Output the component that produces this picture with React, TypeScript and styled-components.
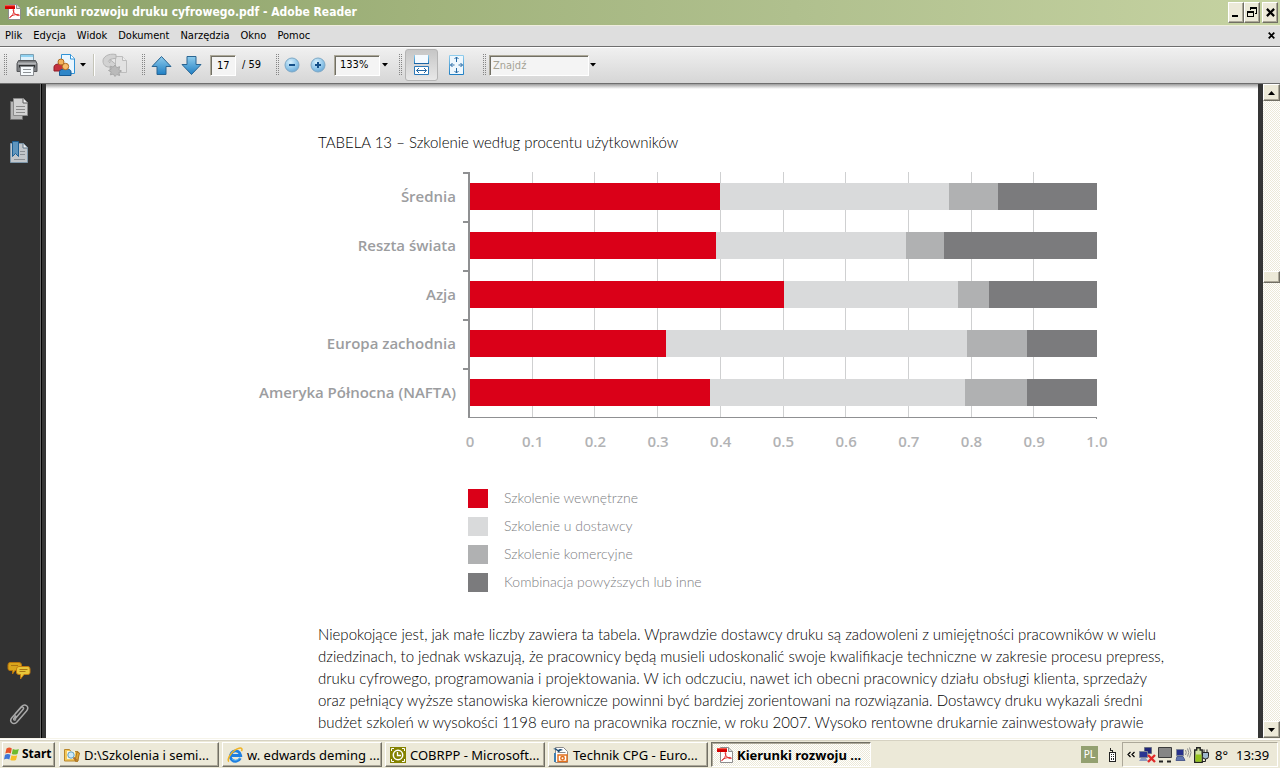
import React from 'react';
import styled, { createGlobalStyle, css } from 'styled-components';

const ui = '"DejaVu Sans Condensed", "DejaVu Sans", sans-serif';
const shell = '"Noto Sans", "Open Sans", sans-serif';
const doc = 'Lato, "Open Sans", sans-serif';
const chartFont = '"Open Sans", "Noto Sans", sans-serif';
const face = '#ece9d8';

const GlobalStyle = createGlobalStyle`
  *, *::before, *::after { box-sizing: border-box; }
  body { margin: 0; background: #fff; }
  button, input, select { font: inherit; color: inherit; margin: 0; border-radius: 0; }
  svg { display: block; flex: none; }
`;

const raised = css`
  background: ${face};
  border: 1px solid;
  border-color: #fff #716f64 #716f64 #fff;
  box-shadow: inset -1px -1px 0 #aca899;
`;

const checker = css`
  background: repeating-conic-gradient(${face} 0 25%, #fff 0 50%) 0 0 / 2px 2px;
`;

/* ---------- window frame ---------- */

const Screen = styled.div`
  display: flex;
  flex-direction: column;
  height: 100vh;
  overflow: hidden;
  font: 11px/14px ${ui};
  color: #000;
`;

const TitleBar = styled.header`
  display: flex;
  align-items: center;
  height: 26px;
  padding: 0 2px 2px 5px;
  gap: 5px;
  background: linear-gradient(90deg, #8ba169, #a1b37c 33%, #b0c08e 62%, #c6d3a2);
  border-bottom: 1px solid #efedde;
`;

const WindowTitle = styled.h1`
  flex: 1;
  margin: 0;
  font: bold 12px/16px ${ui};
  color: #fff;
  white-space: nowrap;
`;

const CaptionButtons = styled.div`
  display: flex;
  padding-top: 1px;
`;

const CaptionButton = styled.button<{ $apart?: boolean }>`
  ${raised}
  display: flex;
  align-items: center;
  justify-content: center;
  width: 16px;
  height: 21px;
  padding: 0;
  margin-left: ${(p) => (p.$apart ? 2 : 0)}px;
`;

const MenuBar = styled.nav`
  display: flex;
  align-items: center;
  justify-content: space-between;
  height: 21px;
  padding: 0 5px 1px;
  background: #dedede;
  border-bottom: 1px solid #6e6e6e;
`;

const MenuList = styled.div`
  display: flex;
  gap: 11px;
`;

const MenuItem = styled.button`
  padding: 0;
  border: 0;
  background: none;
`;

/* ---------- toolbar ---------- */

const ToolBar = styled.div`
  display: flex;
  align-items: center;
  gap: 8px;
  height: 37px;
  padding: 0 3px 1px;
  background: linear-gradient(#f0f0f0, #d6d6d6);
  border-top: 1px solid #fff;
  border-bottom: 1px solid #6e6e6e;
`;

const ToolGroup = styled.div`
  display: flex;
  align-items: center;
`;

const Grip = styled.span`
  width: 4px;
  height: 22px;
  background: conic-gradient(#858585 0 25%, transparent 0) 0 0 / 2px 2px;
`;

const ToolButton = styled.button<{ $w: number; $on?: boolean }>`
  display: flex;
  align-items: center;
  justify-content: center;
  gap: 3px;
  width: ${(p) => p.$w}px;
  height: 32px;
  padding: 0;
  margin-left: ${(p) => (p.$on ? 3 : 0)}px;
  border: 1px solid ${(p) => (p.$on ? '#b4b4b4' : 'transparent')};
  border-radius: 3px;
  background: ${(p) => (p.$on ? 'linear-gradient(#c6c6c6, #e8e8e8)' : 'none')};
`;

const Separator = styled.span`
  width: 2px;
  height: 22px;
  margin: 0 2px;
  background: linear-gradient(90deg, #c4c4b8 50%, #fff 50%);
`;

const sunken = css`
  height: 21px;
  border: 1px solid;
  border-color: #aca899 #fff #fff #aca899;
  box-shadow: inset 1px 1px 0 #716f64;
  background: #f4f4f4;
  outline: 0;
`;

const PageInput = styled.input`
  ${sunken}
  width: 26px;
  margin: 0 6px 0 4px;
  padding: 0 0 0 6px;
`;

const ZoomSelect = styled.select`
  ${sunken}
  appearance: none;
  width: 46px;
  margin-left: 4px;
  padding: 0 0 0 5px;
`;

const FindInput = styled.input`
  ${sunken}
  width: 100px;
  margin-left: 3px;
  padding: 0 3px;
  &::placeholder { color: #a5a294; opacity: 1; }
`;

const PageCount = styled.span`
  width: 25px;
  white-space: nowrap;
`;

/* ---------- document area ---------- */

const Main = styled.main`
  flex: 1;
  display: flex;
  min-height: 0;
`;

const SidePanel = styled.aside`
  display: flex;
  flex-direction: column;
  justify-content: space-between;
  width: 46px;
  padding: 13px 8px 12px 0;
  background: linear-gradient(90deg, #323232 40px, #6a6a6a 40px 41px, #000 41px 42px, #353535 42px);
`;

const PanelGroup = styled.div`
  display: flex;
  flex-direction: column;
  gap: 19px;
`;

const PanelButton = styled.button`
  display: flex;
  justify-content: center;
  align-items: center;
  height: 24px;
  padding: 0;
  border: 0;
  background: none;
`;

const Page = styled.article`
  flex: 1;
  min-width: 0;
  overflow: hidden;
  padding: 49px 89px 0 214px;
  font-family: ${doc};
  background: linear-gradient(#9a9a9a, #d8d8d8 3px, #fff 5px);
`;

const Caption = styled.h2`
  margin: 0 0 21px 58px;
  font: 300 15px/18px ${doc};
`;

const Gutter = styled.div`
  width: 5px;
  background: #353535;
`;

const Chart = styled.figure`
  margin: 0;
  padding-right: 72px;
`;

const Row = styled.div`
  display: flex;
  height: 49px;
`;

const RowLabel = styled.div`
  display: flex;
  justify-content: flex-end;
  width: 196px;
  margin-right: 7px;
  white-space: nowrap;
  font: 600 15px/48px ${chartFont};
  color: #9c9d9f;
`;

const Tick = styled.div`
  width: 7px;
  border-top: 2px solid #8f9092;
  border-right: 2px solid #8f9092;
`;

const Plot = styled.div`
  flex: 1;
  display: grid;
  grid-template: 1fr / 1fr;
  > * { grid-area: 1 / 1; }
`;

const GridLines = styled.div`
  display: flex;
`;

const GridCell = styled.span`
  flex: 1;
  border-right: 1px solid #cfd0d1;
  &:last-child { border-color: transparent; }
`;

const Bar = styled.div`
  display: flex;
  align-self: center;
  height: 27px;
`;

const Segment = styled.span<{ $color: string }>`
  background: ${(p) => p.$color};
`;

const Baseline = styled.div`
  height: 2px;
  margin-left: 208px;
  border-top: 1px solid #8f9092;
  border-right: 1px solid #8f9092;
`;

const Axis = styled.div`
  display: flex;
  justify-content: space-between;
  margin: 12px -20px 0 190px;
  font: 600 15px/20px ${chartFont};
  color: #b2b3b5;
`;

const AxisLabel = styled.span`
  width: 40px;
  text-align: center;
`;

const Legend = styled.ul`
  display: flex;
  flex-direction: column;
  gap: 8px;
  margin: 37px 0 0 208px;
  padding: 0;
  list-style: none;
`;

const LegendItem = styled.li`
  display: flex;
  align-items: center;
  gap: 16px;
  height: 20px;
  font-size: 14px;
  font-weight: 300;
  line-height: 18px;
  color: #7c7d7f;
`;

const Swatch = styled.span<{ $color: string }>`
  width: 20px;
  height: 19px;
  background: ${(p) => p.$color};
`;

const Body = styled.p`
  margin: 31px 0 0 58px;
  font-size: 15px;
  font-weight: 300;
  line-height: 22px;
  white-space: nowrap;
`;

const Line = styled.span`
  display: block;
`;

const ScrollBar = styled.div`
  ${checker}
  display: flex;
  flex-direction: column;
  width: 17px;
`;

const ScrollButton = styled.button`
  ${raised}
  display: flex;
  align-items: center;
  justify-content: center;
  height: 17px;
  padding: 0;
`;

const Thumb = styled.div`
  ${raised}
  height: 12px;
`;

const ScrollSpace = styled.div<{ $grow: number }>`
  flex: ${(p) => p.$grow};
`;

/* ---------- task bar ---------- */

const TaskBar = styled.footer`
  display: flex;
  align-items: center;
  gap: 4px;
  height: 30px;
  padding: 2px 2px 0;
  background: ${face};
  border-top: 1px solid #f6f4ea;
  box-shadow: inset 0 1px 0 #fff, inset 0 2px 0 #d6d2c2;
  font: 13px/18px ${shell};
`;

const StartButton = styled.button`
  ${raised}
  display: flex;
  align-items: center;
  gap: 2px;
  width: 53px;
  height: 25px;
  padding: 0 1px 2px;
  font-size: 12px;
  font-weight: 700;
`;

const Tasks = styled.div`
  flex: 1;
  display: flex;
  gap: 3px;
  min-width: 0;
`;

const TaskButton = styled.button<{ $active?: boolean }>`
  ${raised}
  display: flex;
  align-items: center;
  gap: 4px;
  width: 160px;
  height: 25px;
  padding: 0 4px;
  white-space: nowrap;
  ${(p) =>
    p.$active &&
    css`
      ${checker}
      border-color: #716f64 #fff #fff #716f64;
      box-shadow: inset 1px 1px 0 #aca899;
      padding: 1px 3px 0 5px;
      font-weight: 700;
    `}
`;

const Language = styled.button`
  width: 17px;
  height: 17px;
  padding: 0;
  border: 0;
  background: #93a070;
  color: #fff;
  font: 11px/17px ${ui};
`;

const DeskBand = styled.span`
  display: flex;
  padding: 0 1px 0 6px;
`;

const Tray = styled.div`
  display: flex;
  align-items: center;
  gap: 2px;
  height: 25px;
  padding: 0 8px 0 4px;
  border: 1px solid;
  border-color: #aca899 #fff #fff #aca899;
`;

const Expand = styled.button`
  padding: 0;
  margin-right: 2px;
  border: 0;
  background: none;
`;

const Temperature = styled.span`
  width: 22px;
  padding-left: 3px;
`;

const Clock = styled.time`
  width: 33px;
`;

/* ---------- icons ---------- */

const PdfIcon = ({ size = 16 }: { size?: number }) => (
  <svg width={size} height={size} viewBox="0 0 16 16">
    <path d="M3.5.5h8l4 4v11h-12z" fill="#fff" stroke="#8d8d8d" />
    <path d="M11.500.5v4h4" fill="#ddd" stroke="#8d8d8d" />
    <path d="M0 1h10v4H0z" fill="#d40000" />
    <path d="M0 1h10v1.200H0z" fill="#f0584a" />
    <path d="M5 13.500c2-1 4-4.500 3.800-7.500 0-1-.9-.8-.7.200.6 3 3 5.500 5.700 5.400 1.200-.1.600-1.200-.8-1.200-2.800 0-5.700.9-7.600 2.200-1 .8-1 1.500-.4.900z" fill="none" stroke="#e03030" />
  </svg>
);

const MinimizeGlyph = () => (
  <svg width="10" height="12" viewBox="0 0 10 12"><path d="M1 9h6v2H1z" /></svg>
);
const RestoreGlyph = () => (
  <svg width="10" height="12" viewBox="0 0 10 12" shapeRendering="crispEdges">
    <path d="M3.500 4V1.500h6V7H7.500M3 2h7M.5 5.500h6v5h-6zM0 5.500h7" fill="none" stroke="#000" />
    <path d="M3 1h7v2H3zM0 5h7v2H0z" />
  </svg>
);
const CloseGlyph = ({ size = 9 }: { size?: number }) => (
  <svg width={size} height={size} viewBox="0 0 8 8">
    <path d="M.8.8l6.400 6.400M7.200.8L.8 7.200" stroke="#000" strokeWidth="2" />
  </svg>
);

const Caret = () => (
  <svg width="6" height="4" viewBox="0 0 6 4"><path d="M0 0h6L3 3.500z" /></svg>
);

const PrinterIcon = () => (
  <svg width="24" height="24" viewBox="0 0 24 24">
    <path d="M5.500 1.500h13v7h-13z" fill="#dff1fb" stroke="#7d9fb1" />
    <path d="M6 2h12v2H6z" fill="#8fd2f2" />
    <path d="M3.500 7.500h17l1.500 3v8H2v-8z" fill="#7c7e81" stroke="#55575a" />
    <path d="M3 9.500h18v2H3z" fill="#b4b6b9" />
    <path d="M4 12h16v2.500H4z" fill="#2f3133" />
    <path d="M5.500 13.500h13v9h-13z" fill="#f6fafd" stroke="#8a8d91" />
    <path d="M8 16.500h8M8 19.500h8" stroke="#8d9296" />
  </svg>
);

const UsersIcon = () => (
  <svg width="24" height="24" viewBox="0 0 24 24">
    <path d="M8.500 1.500h9l4 4v15h-13z" fill="#e9f6ff" stroke="#2f92d6" />
    <path d="M17.500 1.500v4.500h4" fill="#fff" stroke="#2f92d6" />
    <path d="M1 18v-4c0-2 2-3 5-3s5 1 5 3v4z" fill="#c4303c" stroke="#8e1a26" />
    <circle cx="8" cy="9" r="3" fill="#f3b25c" stroke="#b06a20" />
    <path d="M6.500 22.500v-3.500c0-2 2-3 6-3s5.500 1 5.500 3v3.500z" fill="#2f86c8" stroke="#175a93" />
    <circle cx="12.500" cy="13.500" r="3.200" fill="#f7bd6c" stroke="#b06a20" />
  </svg>
);

const ShareIcon = () => (
  <svg width="26" height="24" viewBox="0 0 26 24">
    <path d="M13.500 3.500h7l4 4v12h-11z" fill="#e2e2e2" stroke="#bdbdbd" />
    <path d="M20.500 3.500v4h4" fill="#eee" stroke="#bdbdbd" />
    <path d="M14 1.500C6 0 1 4 1 8s3 6.500 7 6v2.500l6-5-6-5v3c-3 0-2-4 6-4z" fill="#d2d2d2" stroke="#b4b4b4" />
    <path d="M13 12l1.700 2.700 3-1-.9 3 2.700 1.300-2.700 1.500.9 3-3-1L13 23.500l-1.700-2.500-3 .9.900-3L6.500 17.500l2.700-1.300-.9-3 3 1z" fill="#bababa" stroke="#a8a8a8" />
  </svg>
);

const BlueGradient = ({ id }: { id: string }) => (
  <linearGradient id={id} x1="0" y1="0" x2="0" y2="1">
    <stop offset="0" stopColor="#8fccec" />
    <stop offset="1" stopColor="#1f7fc4" />
  </linearGradient>
);

const PageArrow = ({ down }: { down?: boolean }) => (
  <svg width="21" height="21" viewBox="0 0 21 21">
    <defs><BlueGradient id={down ? 'arrowDown' : 'arrowUp'} /></defs>
    <path
      d={down ? 'M6 1.500h9v8h5L10.500 19.500 1 9.500h5z' : 'M10.500 1.500L20 11.500h-5v8H6v-8H1z'}
      fill={`url(#${down ? 'arrowDown' : 'arrowUp'})`}
      stroke="#2a6592"
    />
  </svg>
);

const ZoomIcon = ({ plus }: { plus?: boolean }) => (
  <svg width="16" height="16" viewBox="0 0 16 16">
    <defs>
      <radialGradient id={plus ? 'zoomPlus' : 'zoomMinus'} cx=".4" cy=".3" r=".8">
        <stop offset="0" stopColor="#d8f0fc" />
        <stop offset=".6" stopColor="#8dc4e8" />
        <stop offset="1" stopColor="#5f9fd0" />
      </radialGradient>
    </defs>
    <circle cx="8" cy="8" r="7" fill={`url(#${plus ? 'zoomPlus' : 'zoomMinus'})`} stroke="#7fa9c6" />
    <path d={plus ? 'M5 8h6M8 5v6' : 'M5 8h6'} stroke="#14508a" strokeWidth="2" />
  </svg>
);

const FitWidthIcon = () => (
  <svg width="17" height="22" viewBox="0 0 17 22">
    <defs><BlueGradient id="fitWidth" /></defs>
    <path d="M1.500 1v8.500h14V1" fill="#f4faff" stroke="url(#fitWidth)" />
    <path d="M1 9.500h15" stroke="#1d66a6" />
    <path d="M1.500 12.500h14v8h-14z" fill="#fff" stroke="#2b78b8" />
    <path d="M3.500 16.500h10M6 14l-2.500 2.500L6 19M11 14l2.500 2.500L11 19" fill="none" stroke="#2468a4" />
  </svg>
);

const FitPageIcon = () => (
  <svg width="17" height="22" viewBox="0 0 17 22">
    <defs><BlueGradient id="fitPage" /></defs>
    <path d="M1.500 1.500h14v19h-14z" fill="#eef7fd" stroke="url(#fitPage)" />
    <path d="M8.500 3v5M8.500 14v5M2.500 11h4M10.500 11h4M6.500 5l2-2 2 2M6.500 17l2 2 2-2M4.500 9l-2 2 2 2M12.500 9l2 2-2 2" fill="none" stroke="#2468a4" />
  </svg>
);

const PagesIcon = () => (
  <svg width="20" height="24" viewBox="0 0 20 24">
    <path d="M1.500 4.500h12v18h-12z" fill="#b5b5b5" stroke="#6f6f6f" />
    <path d="M4.500 1.500h10l4 4v13h-14z" fill="#d2d2d2" stroke="#8a8a8a" />
    <path d="M14 1.500v4.500h4.500" fill="#eee" stroke="#5c5c5c" />
    <path d="M7 9.500h9M7 12.500h9M7 15.500h9" stroke="#8a8a8a" />
  </svg>
);

const BookmarkIcon = () => (
  <svg width="20" height="24" viewBox="0 0 20 24">
    <path d="M1.500 3.500h13l4 4v15h-17z" fill="#c2c6ca" stroke="#7e98ac" />
    <path d="M14 3.500V8h4.500" fill="#eee" stroke="#5c7488" />
    <path d="M11 11.500h5M11 14.500h5M5 19.500h11" stroke="#8a8f94" />
    <path d="M3.500 1.500h6v15l-3-3-3 3z" fill="#5f95bd" stroke="#1d5f93" />
  </svg>
);

const CommentsIcon = () => (
  <svg width="24" height="20" viewBox="0 0 24 20">
    <path d="M3 1.500h9q2.500 0 2.500 2.500v3.500q0 2-2.500 2H8L5.500 13V9.500H3q-2 0-2-2V4q0-2.500 2-2.500z" fill="#d9a51c" stroke="#b5730a" />
    <path d="M12 5.500h9q2 0 2 2.500v3.500q0 2-2 2h-4L13.500 18v-4.500H12q-2.500 0-2.500-2V8q0-2.500 2.500-2.500z" fill="#e8c63a" stroke="#c27a10" />
    <path d="M12.500 8.500h8M12.500 10.500h6M4 4.500h7" stroke="#a87412" />
  </svg>
);

const ClipIcon = () => (
  <svg width="22" height="24" viewBox="0 0 22 24">
    <path
      d="M7 17l8-9.500c1.500-1.800-.6-3.600-2.200-1.800L4 15.500c-3.500 4 1.500 8.500 5 4.500l9.500-11c3.500-4.500-1.500-8-5-4.500L7 12M8 17.500c-1.800 1.600-3-.3-1.700-1.800L8 13.500"
      fill="none" stroke="#a9a9a9" strokeWidth="1.500"
    />
  </svg>
);

const ScrollArrow = ({ down }: { down?: boolean }) => (
  <svg width="7" height="4" viewBox="0 0 7 4"><path d={down ? 'M0 0h7L3.500 4z' : 'M0 4h7L3.500 0z'} /></svg>
);

const WindowsLogo = () => (
  <svg width="16" height="16" viewBox="0 0 16 16">
    <path d="M2.500 2.500q3-1.800 5.300 0L6.800 7.500q-2.600-1.500-5.500 0z" fill="#e8542a" />
    <path d="M8.800 3q3 1.300 6 0L13.500 8q-3 1.200-5.700 0z" fill="#6dbb2c" />
    <path d="M1 8.800q3-1.500 5.500 0L5.300 13.500q-2.500-1.500-5.300 0z" fill="#3f77d8" />
    <path d="M7.500 9.200q3 1.300 5.700 0L12 14q-3 1.200-5.700 0z" fill="#f6bf24" />
  </svg>
);

const FolderIcon = () => (
  <svg width="16" height="16" viewBox="0 0 16 16">
    <path d="M.5 2.500h5l1.500 2h7v9.500H.5z" fill="#f4c95a" stroke="#b8862a" />
    <path d="M13 5l2.500 1-2 8.500L11 14z" fill="#e3a832" stroke="#a87420" />
    <path d="M3 4h8v8H3z" fill="#fdf6dc" />
    <circle cx="7" cy="8" r="3.200" fill="#cdeaf8" stroke="#5d9ec2" />
    <path d="M9.500 10.500l3 3" stroke="#b0702a" strokeWidth="2" />
  </svg>
);

const ExplorerIcon = () => (
  <svg width="16" height="16" viewBox="0 0 16 16">
    <path d="M13.300 11.200A5.200 5.200 0 1 1 13.700 8.500H4.500" fill="none" stroke="#1e7fe0" strokeWidth="2.800" />
    <path d="M13 10.200A5 5 0 0 1 5 12" fill="none" stroke="#5cb8f6" />
    <path d="M2 14.500C-1 13 5 3 12 1.200c3-.7 3.500 1 2.500 3" fill="none" stroke="#f0b323" strokeWidth="1.500" />
  </svg>
);

const OutlookIcon = () => (
  <svg width="16" height="16" viewBox="0 0 16 16">
    <path d="M0 0h16v16H0z" fill="#848200" />
    <path d="M1.500 4V1.500H4M12 1.500h2.500V4M1.500 12v2.500H4M12 14.500h2.500V12" fill="none" stroke="#fff" />
    <circle cx="8" cy="8" r="4.700" fill="none" stroke="#fff" strokeWidth="1.500" />
    <path d="M7.500 5v3.500H11" fill="none" stroke="#fff" strokeWidth="1.300" />
  </svg>
);

const ImpressIcon = () => (
  <svg width="16" height="16" viewBox="0 0 16 16">
    <path d="M2.500.5h8l4 4v11h-12z" fill="#fff" stroke="#8b8b8b" />
    <path d="M0 2q3-2 5 1 2-2 5 0-3 0-4.500 2.500Q3 2 0 2z" fill="#1f4f78" />
    <path d="M2 6v9" stroke="#3f7fb0" strokeWidth="2" />
    <path d="M4.500 5.500h8" stroke="#8b8b8b" />
    <path d="M5 8h9v6.500H5z" fill="#fff" stroke="#e2701e" strokeWidth="1.500" />
    <circle cx="9.500" cy="11.200" r="1.700" fill="none" stroke="#e2701e" strokeWidth="1.500" />
  </svg>
);

const KeypadIcon = () => (
  <svg width="9" height="14" viewBox="0 0 9 14" shapeRendering="crispEdges">
    <path d="M1.500 4.500h6v9h-6zM4.500 4V2.500h-2V0" fill="#fff" stroke="#222" />
    <path d="M3 6h1v1H3zM5 6h1v1H5zM3 8h1v1H3zM5 8h1v1H5zM3 10h1v2H3zM5 10h1v2H5z" fill="#222" />
  </svg>
);

const NetworkOffIcon = () => (
  <svg width="17" height="16" viewBox="0 0 17 16">
    <path d="M5.500.5h7v6h-7z" fill="#20267a" stroke="#6a7080" />
    <path d="M.5 4.500h8v6h-8z" fill="#2b3592" stroke="#7d8496" />
    <path d="M2 11h5l2 3H0z" fill="#8f9cc0" />
    <path d="M9 8l7 7M16 8l-7 7" stroke="#e02a2a" strokeWidth="2.400" />
  </svg>
);

const MonitorIcon = () => (
  <svg width="15" height="16" viewBox="0 0 15 16">
    <path d="M.5.5h13v10H.5z" fill="#858585" stroke="#3c3c3c" />
    <path d="M1 14.500h4M9 14.500h4" stroke="#222" strokeWidth="2" />
  </svg>
);

const WirelessIcon = () => (
  <svg width="17" height="16" viewBox="0 0 17 16">
    <path d="M1.500 2.500h7v6h-7z" fill="#27308c" stroke="#7d8496" />
    <path d="M2 9.500h6l2 4H1z" fill="#5f74b0" stroke="#4f5d90" />
    <path d="M10.500 3q1.500 2.500 0 5M12.500 1.500q2.500 4 0 8M14.500.5q3 5 0 10" fill="none" stroke="#8a8a8a" />
  </svg>
);

const BatteryIcon = () => (
  <svg width="16" height="16" viewBox="0 0 16 16">
    <path d="M.7 3h2V.8h3.500V3h2v12.300H.7z" fill="#cfe0a0" stroke="#222" strokeWidth="1.400" />
    <path d="M1.500 7.500h6v7.200h-6z" fill="#93c21c" />
    <path d="M8.500 5.500h6v4q0 2.500-3 2.500t-3-2.500z" fill="#9fb8cc" stroke="#222" />
    <path d="M10 2.500v3M13 2.500v3M11.500 12v2.500H8" fill="none" stroke="#222" />
  </svg>
);

const ChevronsIcon = () => (
  <svg width="8" height="7" viewBox="0 0 8 7">
    <path d="M3.500 1L1 3.500 3.500 6M7.500 1L5 3.500 7.500 6" fill="none" stroke="#000" strokeWidth="1.200" />
  </svg>
);

/* ---------- data ---------- */

const series = [
  { name: 'Szkolenie wewnętrzne', color: '#da0018' },
  { name: 'Szkolenie u dostawcy', color: '#d9dadb' },
  { name: 'Szkolenie komercyjne', color: '#b0b1b2' },
  { name: 'Kombinacja powyższych lub inne', color: '#7b7b7d' },
];

const rows = [
  { label: 'Średnia', values: [399, 365, 78, 158] },
  { label: 'Reszta świata', values: [393, 303, 60, 244] },
  { label: 'Azja', values: [501, 278, 48, 173] },
  { label: 'Europa zachodnia', values: [312, 480, 96, 112] },
  { label: 'Ameryka Północna (NAFTA)', values: [382, 407, 100, 111] },
];

const axis = ['0', '0.1', '0.2', '0.3', '0.4', '0.5', '0.6', '0.7', '0.8', '0.9', '1.0'];

const paragraph = [
  'Niepokojące jest, jak małe liczby zawiera ta tabela. Wprawdzie dostawcy druku są zadowoleni z umiejętności pracowników w wielu',
  'dziedzinach, to jednak wskazują, że pracownicy będą musieli udoskonalić swoje kwalifikacje techniczne w zakresie procesu prepress,',
  'druku cyfrowego, programowania i projektowania. W ich odczuciu, nawet ich obecni pracownicy działu obsługi klienta, sprzedaży',
  'oraz pełniący wyższe stanowiska kierownicze powinni być bardziej zorientowani na rozwiązania. Dostawcy druku wykazali średni',
  'budżet szkoleń w wysokości 1198 euro na pracownika rocznie, w roku 2007. Wysoko rentowne drukarnie zainwestowały prawie',
];

const menus = ['Plik', 'Edycja', 'Widok', 'Dokument', 'Narzędzia', 'Okno', 'Pomoc'];

const tasks = [
  { icon: <FolderIcon />, label: 'D:\\Szkolenia i semi...' },
  { icon: <ExplorerIcon />, label: 'w. edwards deming ...' },
  { icon: <OutlookIcon />, label: 'COBRPP - Microsoft...' },
  { icon: <ImpressIcon />, label: 'Technik CPG - Euro...' },
  { icon: <PdfIcon />, label: 'Kierunki rozwoju ...', active: true },
];

export default function App() {
  return (
    <Screen>
      <GlobalStyle />
      <TitleBar>
        <PdfIcon />
        <WindowTitle>Kierunki rozwoju druku cyfrowego.pdf - Adobe Reader</WindowTitle>
        <CaptionButtons>
          <CaptionButton aria-label="Minimalizuj"><MinimizeGlyph /></CaptionButton>
          <CaptionButton aria-label="Przywróć"><RestoreGlyph /></CaptionButton>
          <CaptionButton $apart aria-label="Zamknij"><CloseGlyph /></CaptionButton>
        </CaptionButtons>
      </TitleBar>
      <MenuBar>
        <MenuList>
          {menus.map((m) => <MenuItem key={m}>{m}</MenuItem>)}
        </MenuList>
        <MenuItem aria-label="Zamknij dokument"><CloseGlyph size={7} /></MenuItem>
      </MenuBar>
      <ToolBar>
        <ToolGroup>
          <Grip />
          <ToolButton $w={40} aria-label="Drukuj"><PrinterIcon /></ToolButton>
          <ToolButton $w={44} aria-label="Współpraca"><UsersIcon /><Caret /></ToolButton>
          <Separator />
          <ToolButton $w={36} aria-label="Udostępnij" disabled><ShareIcon /></ToolButton>
        </ToolGroup>
        <ToolGroup>
          <Grip />
          <ToolButton $w={32} aria-label="Poprzednia strona"><PageArrow /></ToolButton>
          <ToolButton $w={29} aria-label="Następna strona"><PageArrow down /></ToolButton>
          <PageInput aria-label="Strona" defaultValue="17" />
          <PageCount>/ 59</PageCount>
        </ToolGroup>
        <ToolGroup>
          <Grip />
          <ToolButton $w={26} aria-label="Pomniejsz"><ZoomIcon /></ToolButton>
          <ToolButton $w={25} aria-label="Powiększ"><ZoomIcon plus /></ToolButton>
          <ZoomSelect aria-label="Powiększenie"><option>133%</option></ZoomSelect>
          <ToolButton $w={10} aria-label="Lista powiększeń"><Caret /></ToolButton>
        </ToolGroup>
        <ToolGroup>
          <Grip />
          <ToolButton $w={33} $on aria-label="Dopasuj szerokość"><FitWidthIcon /></ToolButton>
          <ToolButton $w={36} aria-label="Dopasuj stronę"><FitPageIcon /></ToolButton>
        </ToolGroup>
        <ToolGroup>
          <Grip />
          <FindInput aria-label="Znajdź" placeholder="Znajdź" />
          <ToolButton $w={8} aria-label="Opcje wyszukiwania"><Caret /></ToolButton>
        </ToolGroup>
      </ToolBar>
      <Main>
        <SidePanel>
          <PanelGroup>
            <PanelButton aria-label="Strony"><PagesIcon /></PanelButton>
            <PanelButton aria-label="Zakładki"><BookmarkIcon /></PanelButton>
          </PanelGroup>
          <PanelGroup>
            <PanelButton aria-label="Komentarze"><CommentsIcon /></PanelButton>
            <PanelButton aria-label="Załączniki"><ClipIcon /></PanelButton>
          </PanelGroup>
        </SidePanel>
        <Page>
          <Caption>TABELA 13 – Szkolenie według procentu użytkowników</Caption>
          <Chart>
            {rows.map((row) => (
              <Row key={row.label}>
                <RowLabel>{row.label}</RowLabel>
                <Tick />
                <Plot>
                  <GridLines>
                    {axis.slice(1).map((a) => <GridCell key={a} />)}
                  </GridLines>
                  <Bar>
                    {row.values.map((v, i) => (
                      <Segment key={i} $color={series[i].color} style={{ flexGrow: v }} />
                    ))}
                  </Bar>
                </Plot>
              </Row>
            ))}
            <Baseline />
            <Axis>
              {axis.map((a) => <AxisLabel key={a}>{a}</AxisLabel>)}
            </Axis>
            <Legend>
              {series.map((s) => (
                <LegendItem key={s.name}><Swatch $color={s.color} />{s.name}</LegendItem>
              ))}
            </Legend>
          </Chart>
          <Body>
            {paragraph.map((line) => <Line key={line}>{line} </Line>)}
          </Body>
        </Page>
        <Gutter />
        <ScrollBar>
          <ScrollButton aria-label="W górę"><ScrollArrow /></ScrollButton>
          <ScrollSpace $grow={170} />
          <Thumb />
          <ScrollSpace $grow={437} />
          <ScrollButton aria-label="W dół"><ScrollArrow down /></ScrollButton>
        </ScrollBar>
      </Main>
      <TaskBar>
        <StartButton><WindowsLogo />Start</StartButton>
        <Tasks>
          {tasks.map((t) => (
            <TaskButton key={t.label} $active={t.active}>{t.icon}{t.label}</TaskButton>
          ))}
        </Tasks>
        <Language>PL</Language>
        <DeskBand><KeypadIcon /></DeskBand>
        <Tray>
          <Expand aria-label="Pokaż ukryte ikony"><ChevronsIcon /></Expand>
          <NetworkOffIcon />
          <MonitorIcon />
          <WirelessIcon />
          <BatteryIcon />
          <Temperature>8°</Temperature>
          <Clock>13:39</Clock>
        </Tray>
      </TaskBar>
    </Screen>
  );
}
